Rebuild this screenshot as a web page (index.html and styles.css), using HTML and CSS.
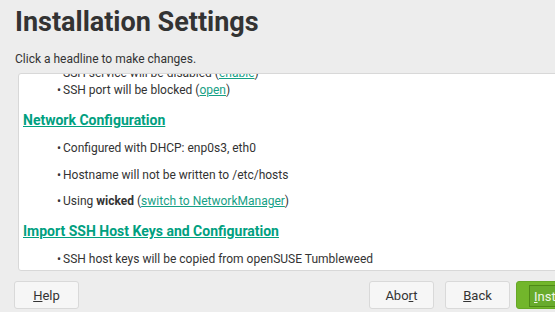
FILE: index.html
```html
<!DOCTYPE html>
<html lang="en">
<head>
    <meta charset="UTF-8">
    <title>Installation Settings</title>
    <link rel="stylesheet" href="styles.css">
</head>
<body>
<div class="window">
    <header class="top">
        <h1>Installation Settings</h1>
        <p>Click a headline to make changes.</p>
    </header>
    <div class="panel">
        <div class="scroller">
            <ul class="tight">
                <li>SSH service will be disabled (<a href="#">enable</a>)</li>
                <li>SSH port will be blocked (<a href="#">open</a>)</li>
            </ul>
            <h2><a href="#">Network Configuration</a></h2>
            <ul class="loose">
                <li>Configured with DHCP: enp0s3, eth0</li>
                <li>Hostname will not be written to /etc/hosts</li>
                <li>Using <b>wicked</b> (<a href="#">switch to NetworkManager</a>)</li>
            </ul>
            <h2><a href="#">Import SSH Host Keys and Configuration</a></h2>
            <ul class="loose">
                <li>SSH host keys will be copied from openSUSE Tumbleweed</li>
            </ul>
        </div>
    </div>
    <footer class="buttons">
        <button class="btn"><u>H</u>elp</button>
        <span class="spacer"></span>
        <button class="btn">Abo<u>r</u>t</button>
        <button class="btn"><u>B</u>ack</button>
        <button class="btn primary"><span class="focus"><u>I</u>nstall</span></button>
    </footer>
</div>
</body>
</html>
```

FILE: styles.css
```css
html, body {
    margin: 0;
    padding: 0;
    background: #ededed;
    overflow: hidden;
}

body {
    font-family: Roboto, "Noto Sans", sans-serif;
    color: #333;
}

.window {
    width: 600px;
    height: 312px;
    display: flex;
    flex-direction: column;
}

.top {
    padding: 7px 15px 0;
}

.top h1 {
    margin: 0;
    font-size: 27px;
    line-height: 31px;
    font-weight: 700;
    color: #333;
}

.top p {
    margin: 13px 0 0;
    font-size: 12px;
    line-height: 16px;
    color: #333;
}

.panel {
    margin: 6px 0 0 18px;
    height: 196px;
    background: #fff;
    border: 1px solid #d8d8d8;
    border-radius: 3px;
    overflow: hidden;
}

.scroller {
    margin-top: -9px;
    padding-left: 4px;
    font-size: 12px;
    line-height: 17px;
}

.scroller a {
    color: #16a085;
    text-decoration: underline;
}

.scroller ul {
    list-style: none;
    margin: 0;
    padding: 0;
}

.scroller li {
    padding-left: 34px;
}

.scroller li::before {
    content: "•";
    display: inline-block;
    width: 6px;
}

.loose li {
    margin-bottom: 9.5px;
}

.scroller h2 {
    margin: 12px 0 11px;
    font-size: 14px;
    line-height: 18px;
    font-weight: 700;
}

.scroller h2 a {
    color: #00a07f;
}

.buttons {
    display: flex;
    gap: 11px;
    padding: 10px 0 0 14px;
}

.spacer {
    width: 268px;
}

.btn {
    width: 65px;
    height: 28px;
    padding: 0;
    font-family: Roboto, "Noto Sans", sans-serif;
    font-size: 13px;
    color: #333;
    background: #f6f6f6;
    border: 1px solid #d9d9d9;
    border-radius: 3px;
}

.btn.primary {
    width: auto;
    margin-left: -5px;
    background: #72b62b;
    border-color: #66a825;
    color: #f0f8e8;
    padding: 3px 12px;
}

.focus {
    display: flex;
    align-items: center;
    justify-content: center;
    height: 100%;
    padding: 0 4px;
    border: 1px solid #4f8a17;
    background: #68ab2c;
}
```
